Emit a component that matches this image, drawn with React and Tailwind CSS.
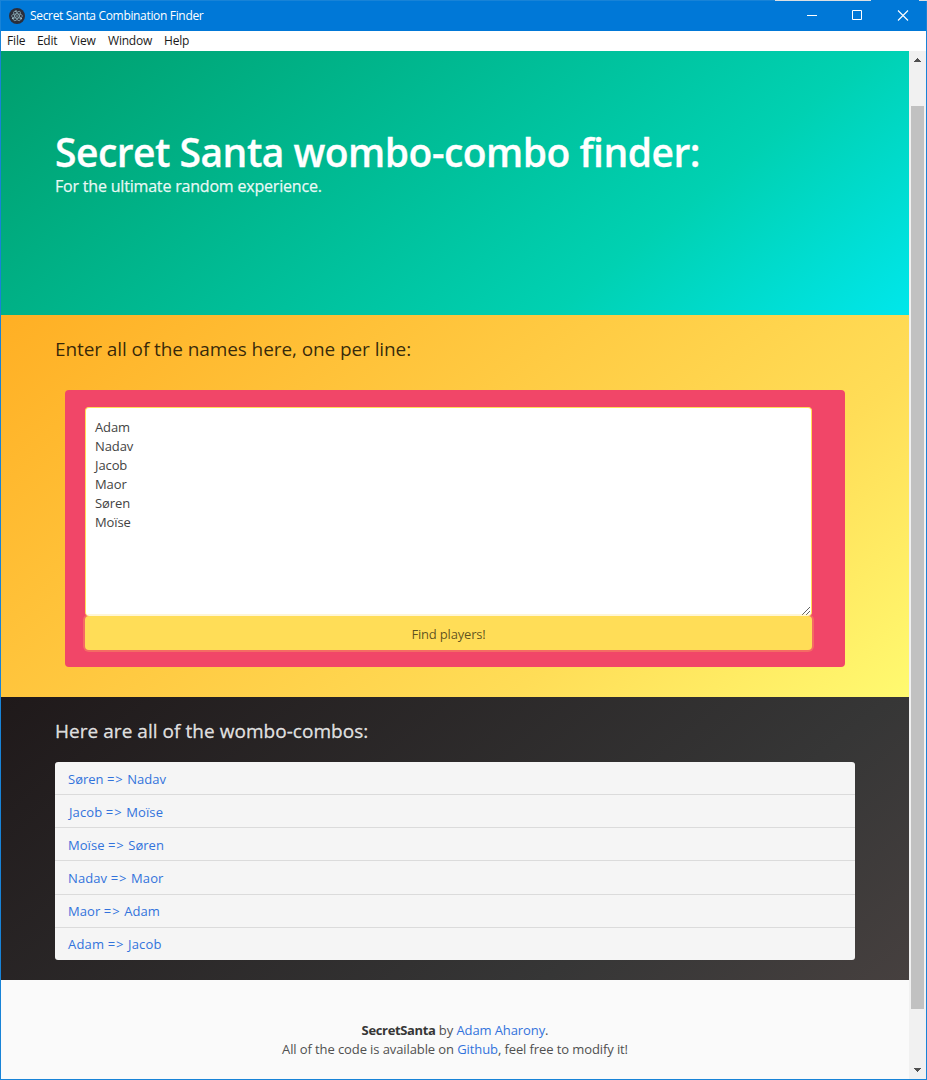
const pairs = [
  { from: "Søren", to: "Nadav", box: "h-[33px] pt-[8px] pl-[13px] border-b tracking-[0px]" },
  { from: "Jacob", to: "Moïse", box: "h-[33px] pt-[8px] pl-[14px] border-b tracking-[0.12px]" },
  { from: "Moïse", to: "Søren", box: "h-[33px] pt-[8px] pl-[13px] border-b tracking-[0.04px]" },
  { from: "Nadav", to: "Maor", box: "h-[34px] pt-[8px] pl-[13px] border-b tracking-[0.1px]" },
  { from: "Maor", to: "Adam", box: "h-[33px] pt-[7px] pl-[13px] border-b tracking-[0.08px]" },
  { from: "Adam", to: "Jacob", box: "h-[32px] pt-[7px] pl-[13px] tracking-[0.16px]" },
];

const names = ["Adam", "Nadav", "Jacob", "Maor", "Søren", "Moïse"].join("\n");

function ElectronIcon() {
  return (
    <svg className="size-4 shrink-0" viewBox="0 0 16 16" fill="none">
      <circle cx="8" cy="8" r="8" fill="#2b2e3a" />
      <g stroke="#a9d3dc" strokeOpacity="0.75" strokeWidth="0.7">
        <ellipse cx="8" cy="8" rx="5.4" ry="2.1" />
        <ellipse cx="8" cy="8" rx="5.4" ry="2.1" transform="rotate(60 8 8)" />
        <ellipse cx="8" cy="8" rx="5.4" ry="2.1" transform="rotate(120 8 8)" />
      </g>
      <g fill="#b4dce4" fillOpacity="0.85">
        <circle cx="8" cy="8" r="0.8" />
        <circle cx="3.7" cy="10.4" r="0.8" />
        <circle cx="12.3" cy="10.6" r="0.8" />
        <circle cx="7" cy="3" r="0.8" />
      </g>
    </svg>
  );
}

function TitleBar() {
  return (
    <div className="flex h-[31px] shrink-0 flex-col bg-[#0078d7]">
      <div className="flex h-px shrink-0 bg-[#1883d7]">
        <div className="ml-[775px] h-px w-[96px] bg-[#dcdfe2]" />
        <div className="h-px w-12 bg-[#0078d7]" />
        <div className="h-px flex-1 bg-[#dcdfe2]" />
      </div>
      <div className="flex h-[30px] items-center border-x border-[#1883d7] pl-2">
        <ElectronIcon />
        <span className="ml-[5px] whitespace-nowrap text-[12px] leading-[18px] tracking-[-0.33px] text-white">
          Secret Santa Combination Finder
        </span>
        <svg className="ml-auto h-[30px] w-[138px] shrink-0" viewBox="0 0 138 30" stroke="#fff" fill="none">
          <path d="M19 14.5h10" />
          <path d="M64.5 9.5h9v9h-9z" />
          <path d="M110 9.5l10 10M120 9.5l-10 10" strokeWidth="1.1" />
        </svg>
      </div>
    </div>
  );
}

function MenuBar() {
  return (
    <div className="flex h-5 shrink-0 items-center gap-[12px] border-x border-[#1883d7] bg-white pl-[6px] text-[12px] leading-5 text-[#1a1a1a]">
      <span className="w-[18px] tracking-[-0.15px]">File</span>
      <span className="w-[21px] tracking-[-0.3px]">Edit</span>
      <span className="w-[26px] tracking-[-0.1px]">View</span>
      <span className="w-[44px] tracking-[-0.2px]">Window</span>
      <span className="tracking-[-0.2px]">Help</span>
    </div>
  );
}

function ScrollBar() {
  return (
    <div className="flex w-[17px] shrink-0 flex-col items-center bg-[#f1f1f1]">
      <svg className="h-[17px] w-[17px] shrink-0" viewBox="0 0 17 17" shapeRendering="crispEdges">
        <path d="M8 7h1v1H8zM7 8h3v1H7zM6 9h5v1H6zM5 10h7v1H5z" fill="#505050" />
      </svg>
      <div className="mt-[38px] h-[903px] w-[13px] bg-[#c1c1c1]" />
      <svg className="mt-auto h-[17px] w-[17px] shrink-0" viewBox="0 0 17 17" shapeRendering="crispEdges">
        <path d="M5 6h7v1H5zM6 7h5v1H6zM7 8h3v1H7zM8 9h1v1H8z" fill="#505050" />
      </svg>
    </div>
  );
}

export default function App() {
  return (
    <div className="flex h-[1080px] w-[927px] flex-col overflow-hidden font-['Open_Sans','Noto_Sans',sans-serif]">
      <TitleBar />
      <MenuBar />
      <div className="flex min-h-0 flex-1 border-x border-b border-[#1883d7]">
        <main className="flex w-[908px] flex-col">
          <section className="h-[264px] shrink-0 bg-[linear-gradient(141deg,#009e6c_0%,#00d1b2_71%,#00e7eb_100%)] pl-[54px] pt-[78px] text-white">
            <h1 className="text-[39px] font-semibold leading-[46px] tracking-[-0.51px] [-webkit-text-stroke:0.3px_#fff]">
              Secret Santa wombo-combo finder:
            </h1>
            <h2 className="text-[16px] leading-[22px] tracking-[-0.19px] text-white/90 [-webkit-text-stroke:0.25px_rgba(255,255,255,0.8)]">
              For the ultimate random experience.
            </h2>
          </section>

          <section className="h-[382px] shrink-0 bg-[linear-gradient(141deg,#ffaf24_0%,#ffdd57_71%,#fffa70_100%)] px-[54px] pt-5">
            <h2 className="text-[19px] leading-7 tracking-[-0.09px] text-black/80">
              Enter all of the names here, one per line:
            </h2>
            <div className="mx-[10px] mt-[27px] h-[277px] rounded-[4px] bg-[#f14668] pl-5 pt-[17px]">
              <div className="relative h-[209px] w-[727px]">
                <textarea
                  readOnly
                  value={names}
                  className="block h-[209px] w-[727px] resize-none overflow-hidden rounded-[4px] border border-b-0 border-[#ffdd57] bg-white px-[9px] py-[10px] text-[13px] leading-[19px] tracking-[-0.1px] text-[#434343] outline-none"
                />
                <svg className="absolute bottom-[1px] right-[2px] size-[8px]" viewBox="0 0 8 8" stroke="#505050" strokeWidth="0.9">
                  <path d="M0 8L8 0M4 8L8 4" />
                </svg>
              </div>
              <button className="relative block h-[34px] w-[727px] rounded-[4px] bg-[#ffdd57] pt-px text-center text-[13px] leading-[35px] tracking-[-0.18px] text-black/65 shadow-[0_0_0_2px_rgba(255,221,87,0.25)]">
                Find players!
              </button>
            </div>
          </section>

          <section className="h-[283px] shrink-0 bg-[linear-gradient(141deg,#1f191a_0%,#363636_71%,#46403f_100%)] px-[54px] pt-5">
            <h2 className="text-[19px] leading-7 tracking-[0.04px] text-[#f5f5f5]/90 [-webkit-text-stroke:0.3px_rgba(245,245,245,0.8)]">
              Here are all of the wombo-combos:
            </h2>
            <div className="mt-[17px] overflow-hidden rounded-[3px] bg-[#f5f5f5] text-[13px] leading-[19px] text-[#3273dc]">
              {pairs.map((p) => (
                <div key={p.from} className={`border-[#dbdbdb] ${p.box}`}>
                  {p.from} <span className="tracking-[1px]">=&gt;</span> {p.to}
                </div>
              ))}
            </div>
          </section>

          <footer className="flex-1 bg-[#fafafa] pt-[41px] text-center text-[13px] leading-[19px] tracking-[-0.1px] text-[#505050]">
            <p>
              <strong className="font-bold tracking-[-0.35px] text-[#363636]">SecretSanta</strong> by{" "}
              <a className="text-[#3273dc]">Adam Aharony</a>.
            </p>
            <p>
              All of the code is available on <a className="text-[#3273dc]">Github</a>, feel free to modify it!
            </p>
          </footer>
        </main>
        <ScrollBar />
      </div>
    </div>
  );
}
